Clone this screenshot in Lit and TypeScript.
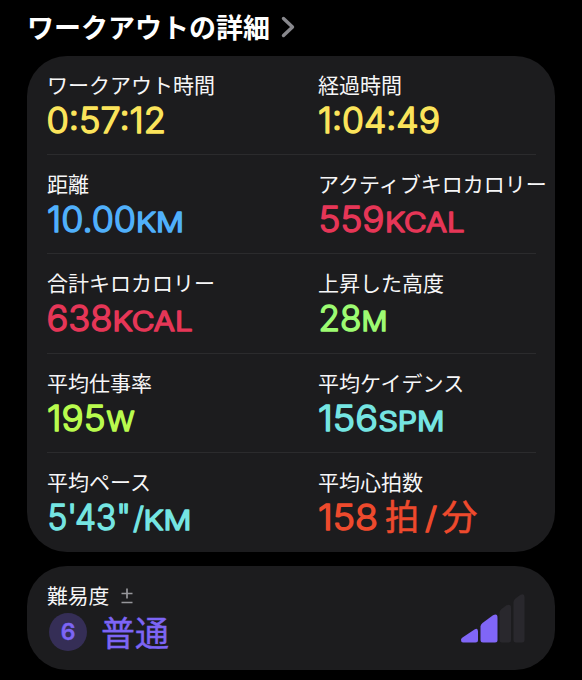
import { LitElement, html, css, svg } from "lit";
import { customElement } from "lit/decorators.js";
import { classMap } from "lit/directives/class-map.js";

interface Run {
  text: string;
  x: number;
  width: number;
  kind: "digits" | "unit" | "kanji" | "slash";
}

interface Metric {
  label: string;
  tone: string;
  runs: Run[];
}

const digits = (text: string, x: number, width: number): Run => ({ text, x, width, kind: "digits" });
const unit = (text: string, x: number, width: number): Run => ({ text, x, width, kind: "unit" });
const kanji = (text: string, x: number, width: number): Run => ({ text, x, width, kind: "kanji" });
const slash = (x: number, width: number): Run => ({ text: "/", x, width, kind: "slash" });

const BASELINES = { digits: 37.3, unit: 37.3, kanji: 36.5, slash: 36 };

const METRICS: Metric[] = [
  { label: "ワークアウト時間", tone: "yellow", runs: [digits("0:57:12", -0.5, 119.5)] },
  { label: "経過時間", tone: "yellow", runs: [digits("1:04:49", 0, 122)] },
  { label: "距離", tone: "blue", runs: [digits("10.00", 0, 89), unit("KM", 89, 48)] },
  { label: "アクティブキロカロリー", tone: "pink", runs: [digits("559", 0.5, 66), unit("KCAL", 67, 79.5)] },
  { label: "合計キロカロリー", tone: "pink", runs: [digits("638", -0.5, 66), unit("KCAL", 65.5, 80)] },
  { label: "上昇した高度", tone: "green", runs: [digits("28", 0.5, 43), unit("M", 43.5, 26)] },
  { label: "平均仕事率", tone: "lime", runs: [digits("195", 0, 58.5), unit("W", 59.5, 28)] },
  { label: "平均ケイデンス", tone: "cyan", runs: [digits("156", 0, 60), unit("SPM", 60.5, 66)] },
  { label: "平均ペース", tone: "cyan", runs: [digits("5'43\"", 0.5, 83.5), slash(86, 11), unit("KM", 96.500, 48)] },
  {
    label: "平均心拍数",
    tone: "orange",
    runs: [digits("158", 0, 60), kanji("拍", 67, 34), slash(107, 12), kanji("分", 123.500, 36)],
  },
];

const EFFORT_BARS = [
  { d: "M2.500 43.500 L14.500 35.500 Q18 33.500 18 37.500 V46 Q18 48.500 15.500 48.500 H3 Q1 48.500 1 46 Q.8 44.500 2.500 43.500Z", on: true },
  { d: "M22.500 29 L33 21.300 Q37.500 19 37.500 23.500 V46 Q37.500 48.500 35 48.500 H23 Q20.500 48.500 20.500 46 V32.500 Q20.500 30.500 22.500 29Z", on: true },
  { d: "M41.500 15 L46.500 11.300 Q51 9.500 51 13.500 V46 Q51 48.500 48.500 48.500 H42 Q39.500 48.500 39.500 46 V18.500 Q39.500 16.500 41.500 15Z", on: false },
  { d: "M55.500 4.500 L60.500 .8 Q64.500 -.8 64.500 3 V46 Q64.500 48.500 62 48.500 H56 Q53.500 48.500 53.500 46 V8 Q53.500 6 55.500 4.500Z", on: false },
];

@customElement("metric-cell")
class MetricCell extends LitElement {
  static properties = { metric: { attribute: false } };
  declare metric: Metric;

  static styles = css`
    :host {
      display: block;
      min-width: 0;
      padding-top: 16px;
      white-space: nowrap;
    }
    .label {
      font: 400 21px/24px "Noto Sans CJK JP", sans-serif;
      color: #f6f6f7;
    }
    .value {
      display: block;
      width: 200px;
      height: 46px;
      overflow: visible;
      fill: currentColor;
      stroke: currentColor;
      stroke-linejoin: round;
      stroke-linecap: round;
    }
    .digits { font: 300 35px Inter, sans-serif; stroke-width: 1.5px; }
    .unit { font: 300 27px Inter, sans-serif; stroke-width: 1.7px; }
    .slash { font: 300 30px Inter, sans-serif; stroke-width: 1.3px; }
    .kanji { font: 400 35px "Noto Sans CJK JP", sans-serif; stroke-width: 0.5px; }
    .yellow { color: #fbe45b; }
    .blue { color: #50b0fb; }
    .pink { color: #e63657; }
    .green { color: #9dfb72; }
    .lime { color: #b9fb4e; }
    .cyan { color: #75e5e2; }
    .orange { color: #ee4a2d; }
  `;

  render() {
    const { label, tone, runs } = this.metric;
    return html`
      <div class="label">${label}</div>
      <svg class=${classMap({ value: true, [tone]: true })}>
        ${runs.map(
          (r) => svg`<text class=${r.kind} x=${r.x} y=${BASELINES[r.kind]}
            textLength=${r.width} lengthAdjust="spacingAndGlyphs">${r.text}</text>`
        )}
      </svg>
    `;
  }
}

@customElement("app-root")
class AppRoot extends LitElement {
  static styles = css`
    :host {
      display: flex;
      flex-direction: column;
      box-sizing: border-box;
      width: 582px;
      height: 680px;
      padding: 0 27px;
      background: #000;
      overflow: hidden;
      font-family: "Noto Sans CJK JP", sans-serif;
    }
    .heading {
      display: flex;
      align-items: center;
      gap: 11px;
      height: 56px;
      margin: 0;
      font: 700 27px/54px "Noto Sans CJK JP", sans-serif;
      color: #fff;
      white-space: nowrap;
      box-sizing: border-box;
      padding-bottom: 2px;
    }
    .chevron { display: block; width: 14px; height: 22px; }
    .card {
      background: #1c1c1e;
      border-radius: 40px;
      box-sizing: border-box;
    }
    .metrics { height: 496px; padding: 0 19px 0 20px; }
    .row {
      display: grid;
      grid-template-columns: 271px 1fr;
      height: 99.2px;
      box-sizing: border-box;
      border-bottom: 1px solid #2b2b2d;
    }
    .row:last-child { border-bottom: 0; }
    .effort {
      display: flex;
      justify-content: space-between;
      height: 104px;
      margin-top: 14px;
      padding: 17px 30px 0 20px;
    }
    .effort-label {
      display: flex;
      gap: 12px;
      font-size: 20.8px;
      line-height: 24px;
      color: #f6f6f7;
    }
    .plusminus { display: block; width: 12px; height: 16px; margin-top: 5px; }
    .rating {
      display: flex;
      align-items: center;
      gap: 14px;
      height: 50px;
      padding-left: 2px;
      font-size: 34px;
      line-height: 48px;
      color: #7d65f5;
      -webkit-text-stroke: 0.4px #7d65f5;
    }
    .score {
      width: 38px;
      height: 38px;
      border-radius: 50%;
      background: #352e56;
      font: 600 23px/38px Inter, sans-serif;
      text-align: center;
    }
    .bars { display: block; width: 65px; height: 49px; margin-top: 11px; }
    .on { fill: #8066f7; }
    .off { fill: #29282d; }
  `;

  render() {
    const rows = [0, 2, 4, 6, 8].map((i) => METRICS.slice(i, i + 2));
    return html`
      <h1 class="heading">
        <span>ワークアウトの詳細</span>
        <svg class="chevron" viewBox="0 0 14 22">
          <path d="M2.500 2.500 L11.500 11 L2.500 19.500" fill="none" stroke="#88888d" stroke-width="3.4" stroke-linecap="round" stroke-linejoin="round" />
        </svg>
      </h1>
      <section class="card metrics">
        ${rows.map((row) => html`<div class="row">${row.map((m) => html`<metric-cell .metric=${m}></metric-cell>`)}</div>`)}
      </section>
      <section class="card effort">
        <div>
          <div class="effort-label">
            <span>難易度</span>
            <svg class="plusminus" viewBox="0 0 12 16">
              <path d="M.5 5.500H11.500M6 .5V10.500M.5 14.500H11.500" fill="none" stroke="#96969b" stroke-width="1.700" />
            </svg>
          </div>
          <div class="rating"><span class="score">6</span><span>普通</span></div>
        </div>
        <svg class="bars" viewBox="0 0 65 49">
          ${EFFORT_BARS.map((b) => svg`<path class=${b.on ? "on" : "off"} d=${b.d} />`)}
        </svg>
      </section>
    `;
  }
}
